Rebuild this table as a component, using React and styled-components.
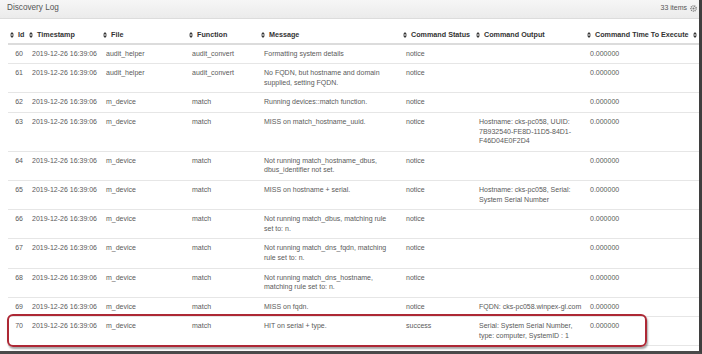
import React from 'react';
import styled, { createGlobalStyle } from 'styled-components';

const GlobalStyle = createGlobalStyle`
  html, body { margin: 0; padding: 0; background: #fff; }
  body { font-family: "Liberation Sans", Arial, sans-serif; }
`;

const COLS = '20px 74px 86px 72px 142px 73px 111px 106px 1fr';

const Frame = styled.div`
  width: 702px;
  height: 354px;
  box-sizing: border-box;
  overflow: hidden;
  background: #fff;
  border-right: 3px solid #3f3f3f;
  border-bottom: 3px solid #4a4a4a;
`;

const Heading = styled.div`
  height: 18px;
  padding: 0 2px 0 7px;
  display: flex;
  align-items: flex-start;
  justify-content: space-between;
  background: linear-gradient(#f6f6f6, #ebebeb);
  border-bottom: 1px solid #dcdcdc;
`;

const Title = styled.span`
  font-size: 8.2px;
  line-height: 11px;
  padding-top: 2px;
  color: #555;
`;

const Count = styled.span`
  display: flex;
  align-items: center;
  gap: 3px;
  font-size: 7px;
  line-height: 10px;
  padding-top: 3px;
  color: #555;
`;

const Body = styled.div`
  padding: 7px 0 0 8px;
`;

const Row = styled.div`
  position: relative;
  display: grid;
  grid-template-columns: ${COLS};
  border-bottom: ${p => (p.$head ? '2px solid #dcdcdc' : '1px solid #e6e6e6')};

  ${p => p.$marked && `
    &::after {
      content: '';
      position: absolute;
      left: -1px;
      right: 52px;
      top: -3px;
      bottom: -2px;
      border: 2px solid #ad2835;
      border-radius: 6px;
      box-shadow: 1px 2px 2px rgba(0, 0, 0, 0.35);
      pointer-events: none;
    }
  `}
`;

const Th = styled.div`
  display: flex;
  align-items: center;
  gap: 4px;
  padding: 4px 0 3px ${p => p.$pl || 1}px;
  font-size: 7.2px;
  line-height: 9.6px;
  font-weight: bold;
  color: #333;
  white-space: nowrap;
  overflow: hidden;
`;

const Td = styled.div`
  padding: 4px ${p => (p.$right ? 5 : p.$wide ? 6 : 1)}px 5px 4px;
  font-size: 7px;
  line-height: 9.6px;
  color: #5a5a5a;
  text-align: ${p => (p.$right ? 'right' : 'left')};
  overflow-wrap: break-word;
`;

const SortIcon = () => (
  <svg width="4" height="6" viewBox="0 0 4 6" style={{ flex: 'none' }}>
    <path d="M0 2.5 L2 0 L4 2.5 Z" fill="#333" />
    <path d="M0 3.5 L2 6 L4 3.5 Z" fill="#333" />
  </svg>
);

const Gear = () => (
  <svg width="7" height="7" viewBox="0 0 8 8">
    <circle cx="4" cy="4" r="3" fill="none" stroke="#777" strokeWidth="1.6" strokeDasharray="1.2 0.9" />
    <circle cx="4" cy="4" r="1.2" fill="#777" />
  </svg>
);

const columns = ['Id', 'Timestamp', 'File', 'Function', 'Message', 'Command Status', 'Command Output', 'Command Time To Execute', ''];

const ts = '2019-12-26 16:39:06';

const rows = [
  [60, 'audit_helper', 'audit_convert', 'Formatting system details', 'notice', ''],
  [61, 'audit_helper', 'audit_convert', 'No FQDN, but hostname and domain supplied, setting FQDN.', 'notice', ''],
  [62, 'm_device', 'match', 'Running devices::match function.', 'notice', ''],
  [63, 'm_device', 'match', 'MISS on match_hostname_uuid.', 'notice', 'Hostname: cks-pc058, UUID: 7B932540-FE8D-11D5-84D1-F46D04E0F2D4'],
  [64, 'm_device', 'match', 'Not running match_hostname_dbus, dbus_identifier not set.', 'notice', ''],
  [65, 'm_device', 'match', 'MISS on hostname + serial.', 'notice', 'Hostname: cks-pc058, Serial: System Serial Number'],
  [66, 'm_device', 'match', 'Not running match_dbus, matching rule set to: n.', 'notice', ''],
  [67, 'm_device', 'match', 'Not running match_dns_fqdn, matching rule set to: n.', 'notice', ''],
  [68, 'm_device', 'match', 'Not running match_dns_hostname, matching rule set to: n.', 'notice', ''],
  [69, 'm_device', 'match', 'MISS on fqdn.', 'notice', 'FQDN: cks-pc058.winpex-gl.com'],
  [70, 'm_device', 'match', 'HIT on serial + type.', 'success', 'Serial: System Serial Number, type: computer, SystemID : 1'],
];

export default function App() {
  return (
    <>
      <GlobalStyle />
      <Frame>
        <Heading>
          <Title>Discovery Log</Title>
          <Count>33 items <Gear /></Count>
        </Heading>
        <Body>
          <Row $head>
            {columns.map((c, i) => (
              <Th key={i} $pl={i === 0 ? 2 : 1}>
                <SortIcon />
                {c && <span>{c}</span>}
              </Th>
            ))}
          </Row>
          {rows.map(([id, file, fn, msg, status, output]) => (
            <Row key={id} $marked={id === 70}>
              <Td $right>{id}</Td>
              <Td>{ts}</Td>
              <Td>{file}</Td>
              <Td>{fn}</Td>
              <Td $wide>{msg}</Td>
              <Td>{status}</Td>
              <Td>{output}</Td>
              <Td>0.000000</Td>
              <Td />
            </Row>
          ))}
        </Body>
      </Frame>
    </>
  );
}
